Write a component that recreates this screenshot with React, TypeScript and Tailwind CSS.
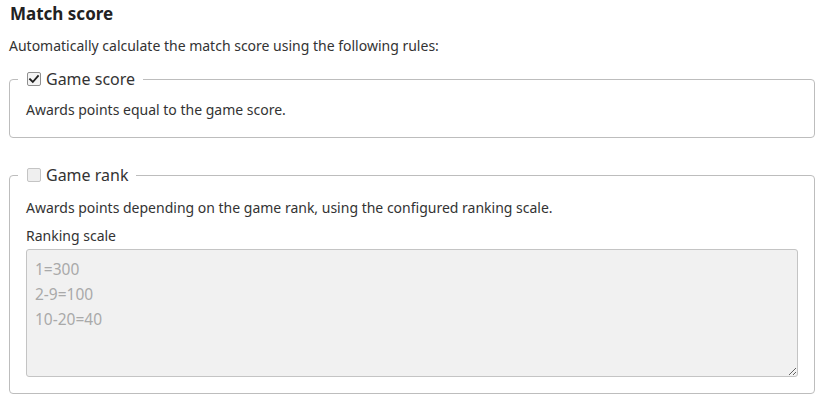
import React from "react";

function Box({ checked }: { checked: boolean }) {
  return (
    <span
      className={
        "flex h-[14px] w-[14px] shrink-0 items-center justify-center rounded-[2px] border " +
        (checked ? "border-[#8f8f8f] bg-[#f4f4f4]" : "border-[#c4c4c4] bg-[#efefef]")
      }
    >
      {checked && (
        <svg width="12" height="12" viewBox="0 0 12 12" fill="none">
          <path d="M2 6.2 L4.8 9 L10 3" stroke="#1f1f1f" strokeWidth="1.8" strokeLinecap="square" />
        </svg>
      )}
    </span>
  );
}

export default function App() {
  return (
    <div
      className="w-[829px] h-[412px] bg-white pl-[9px] pt-[2px] text-[#333]"
      style={{ fontFamily: '"Noto Sans", "Open Sans", sans-serif' }}
    >
      <h2 className="pl-px text-[17px] font-bold leading-[24px] text-[#222]">Match score</h2>
      <p className="mt-[9px] text-[14px] leading-[21px]">
        Automatically calculate the match score using the following rules:
      </p>

      <fieldset className="mt-[12px] w-[806px] rounded-[4px] border border-[#bdbdbd] px-[16px] pt-[9px] pb-[17px]">
        <legend className="-ml-[8px] flex items-center gap-[5px] pl-[9px] pr-[8px] text-[16px] leading-[22px] text-[#333]">
          <Box checked />
          <span>Game score</span>
        </legend>
        <p className="text-[14px] leading-[21px]">Awards points equal to the game score.</p>
      </fieldset>

      <fieldset className="mt-[26px] w-[806px] rounded-[4px] border border-[#bdbdbd] px-[16px] pt-[11px] pb-[16px]">
        <legend className="-ml-[8px] flex items-center gap-[5px] pl-[9px] pr-[8px] text-[16px] leading-[22px] text-[#333]">
          <Box checked={false} />
          <span>Game rank</span>
        </legend>
        <p className="text-[14px] leading-[21px]">
          Awards points depending on the game rank, using the configured ranking scale.
        </p>
        <label className="mt-[7px] block text-[14px] leading-[21px]">Ranking scale</label>
        <textarea
          readOnly
          defaultValue={"1=300\n2-9=100\n10-20=40"}
          className="mt-[3px] block h-[128px] w-[772px] resize rounded-[3px] border border-[#c4c4c4] bg-[#f1f1f1] px-[8px] pt-[7px] text-[15.5px] leading-[25px] text-[#a9a9a9] outline-none"
          style={{ fontFamily: '"Noto Sans", "Open Sans", sans-serif' }}
        />
      </fieldset>
    </div>
  );
}
